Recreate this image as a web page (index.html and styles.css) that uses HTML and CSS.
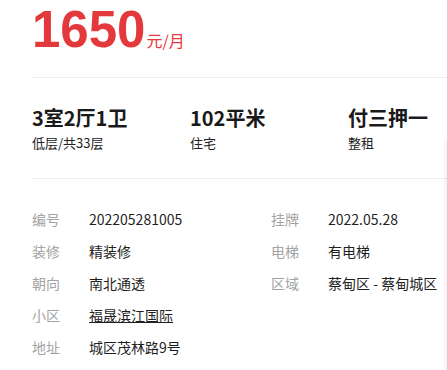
FILE: index.html
```html
<!DOCTYPE html>
<html lang="zh">
<head>
<meta charset="utf-8">
<link rel="stylesheet" href="styles.css">
</head>
<body>
<div class="page">
  <div class="price">
    <span class="num">1650</span><span class="unit">元/月</span>
  </div>
  <div class="stats">
    <div class="stat">
      <div class="big">3室2厅1卫</div>
      <div class="sub">低层/共33层</div>
    </div>
    <div class="stat">
      <div class="big">102平米</div>
      <div class="sub">住宅</div>
    </div>
    <div class="stat">
      <div class="big">付三押一</div>
      <div class="sub">整租</div>
    </div>
  </div>
  <div class="details">
    <div class="row"><span class="lbl">编号</span><span class="val">202205281005</span></div>
    <div class="row"><span class="lbl">挂牌</span><span class="val">2022.05.28</span></div>
    <div class="row"><span class="lbl">装修</span><span class="val">精装修</span></div>
    <div class="row"><span class="lbl">电梯</span><span class="val">有电梯</span></div>
    <div class="row"><span class="lbl">朝向</span><span class="val">南北通透</span></div>
    <div class="row"><span class="lbl">区域</span><span class="val">蔡甸区 - 蔡甸城区</span></div>
    <div class="row full"><span class="lbl">小区</span><a class="val link" href="#">福晟滨江国际</a></div>
    <div class="row full"><span class="lbl">地址</span><span class="val">城区茂林路9号</span></div>
  </div>
</div>
<div class="edge"></div>
</body>
</html>
```
FILE: styles.css
```css
html, body {
  margin: 0;
  padding: 0;
  background: #fff;
}
body {
  font-family: "Noto Sans CJK SC", "Noto Sans", sans-serif;
  color: #222;
  overflow: hidden;
}
.page {
  padding-left: 32px;
}
.price {
  height: 78px;
  border-bottom: 1px solid #ececec;
  box-sizing: border-box;
  display: flex;
  align-items: baseline;
}
.price .num {
  font-family: "Liberation Sans", Arial, sans-serif;
  font-weight: bold;
  font-size: 51px;
  line-height: 60px;
  color: #e4393c;
}
.price .unit {
  font-size: 16px;
  color: #e4393c;
  margin-left: 1px;
}
.stats {
  display: flex;
  height: 101px;
  box-sizing: border-box;
  border-bottom: 1px solid #ececec;
  padding-top: 26px;
}
.stat {
  flex: none;
  width: 158px;
  white-space: nowrap;
}
.stat:last-child {
  width: auto;
}
.big {
  font-size: 20px;
  font-weight: bold;
  line-height: 28px;
  color: #1a1a1a;
}
.sub {
  font-size: 13px;
  line-height: 20px;
  color: #222;
  margin-top: 1px;
}
.details {
  display: grid;
  grid-template-columns: 239px 1fr;
  padding-top: 24px;
}
.row {
  display: flex;
  height: 32px;
  align-items: center;
  font-size: 14px;
  white-space: nowrap;
}
.row.full {
  grid-column: 1 / -1;
}
.lbl {
  width: 57px;
  flex: none;
  color: #a3a3a3;
}
.val {
  color: #1f1f1f;
}
.link {
  text-decoration: underline;
  color: #1f1f1f;
}
.edge {
  position: fixed;
  right: 0;
  top: 140px;
  bottom: 0;
  width: 5px;
  background: linear-gradient(to left, rgba(0,0,0,0.05), rgba(0,0,0,0));
}
```
